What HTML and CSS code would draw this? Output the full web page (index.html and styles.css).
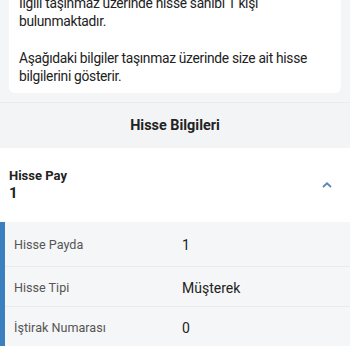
FILE: index.html
```html
<!DOCTYPE html>
<html lang="tr">
<head>
<meta charset="utf-8">
<link rel="stylesheet" href="styles.css">
</head>
<body>
<div class="top">
  <div class="card">
    <p class="msg">İlgili taşınmaz üzerinde hisse sahibi 1 kişi bulunmaktadır.</p>
    <p class="msg">Aşağıdaki bilgiler taşınmaz üzerinde size ait hisse bilgilerini gösterir.</p>
  </div>
</div>
<div class="section-head">Hisse Bilgileri</div>
<div class="panel">
  <div class="acc-head">
    <div class="acc-title">
      <div class="acc-label">Hisse Pay</div>
      <div class="acc-value">1</div>
    </div>
    <svg class="chev" width="10" height="6" viewBox="0 0 10 6"><path d="M1 5 L5 1.3 L9 5" fill="none" stroke="#5b87b0" stroke-width="1.8"/></svg>
  </div>
  <div class="rows">
    <div class="row"><span class="k">Hisse Payda</span><span class="v">1</span></div>
    <div class="row"><span class="k">Hisse Tipi</span><span class="v">Müşterek</span></div>
    <div class="row"><span class="k">İştirak Numarası</span><span class="v">0</span></div>
  </div>
</div>
</body>
</html>
```
FILE: styles.css
```css
html, body { margin: 0; padding: 0; }
body {
  width: 350px;
  height: 350px;
  overflow: hidden;
  background: #ffffff;
  font-family: Roboto, "Liberation Sans", sans-serif;
  color: #222;
}
.top {
  background: #f4f5f7;
  padding: 0 9px 9px 9px;
  border-bottom: 1px solid #eaebee;
}
.card {
  background: #fff;
  border-radius: 0 0 6px 6px;
  padding: 0 10px 8px 10px;
}
.msg {
  margin: 0;
  font-size: 13.8px;
  letter-spacing: -0.3px;
  line-height: 18.3px;
  color: #222;
}
.msg:first-child { margin-top: -6px; }
.msg + .msg { margin-top: 18px; }
.section-head {
  background: #f3f4f6;
  height: 45px;
  line-height: 45px;
  text-align: center;
  font-weight: 700;
  font-size: 14.4px;
  color: #222;
}
.panel { background: #fff; }
.acc-head {
  display: flex;
  align-items: center;
  justify-content: space-between;
  padding: 20px 18px 20px 9px;
}
.acc-label { font-weight: 700; font-size: 13px; line-height: 16px; color: #222; }
.acc-value { font-weight: 700; font-size: 15px; line-height: 18px; color: #222; }
.chev { display: block; }
.rows {
  border-left: 5px solid #3b7fc1;
  background: #f5f6f8;
}
.row {
  display: flex;
  align-items: center;
  box-sizing: border-box;
  height: 40px;
  padding: 2px 0 0 9px;
  border-top: 1px solid #e9ebee;
}
.row:first-child { border-top: 0; height: 44px; padding-top: 2px; }
.k {
  width: 168px;
  font-size: 12.6px;
  line-height: 16px;
  color: #555;
}
.v {
  font-size: 14px;
  line-height: 16px;
  color: #222;
}
```
